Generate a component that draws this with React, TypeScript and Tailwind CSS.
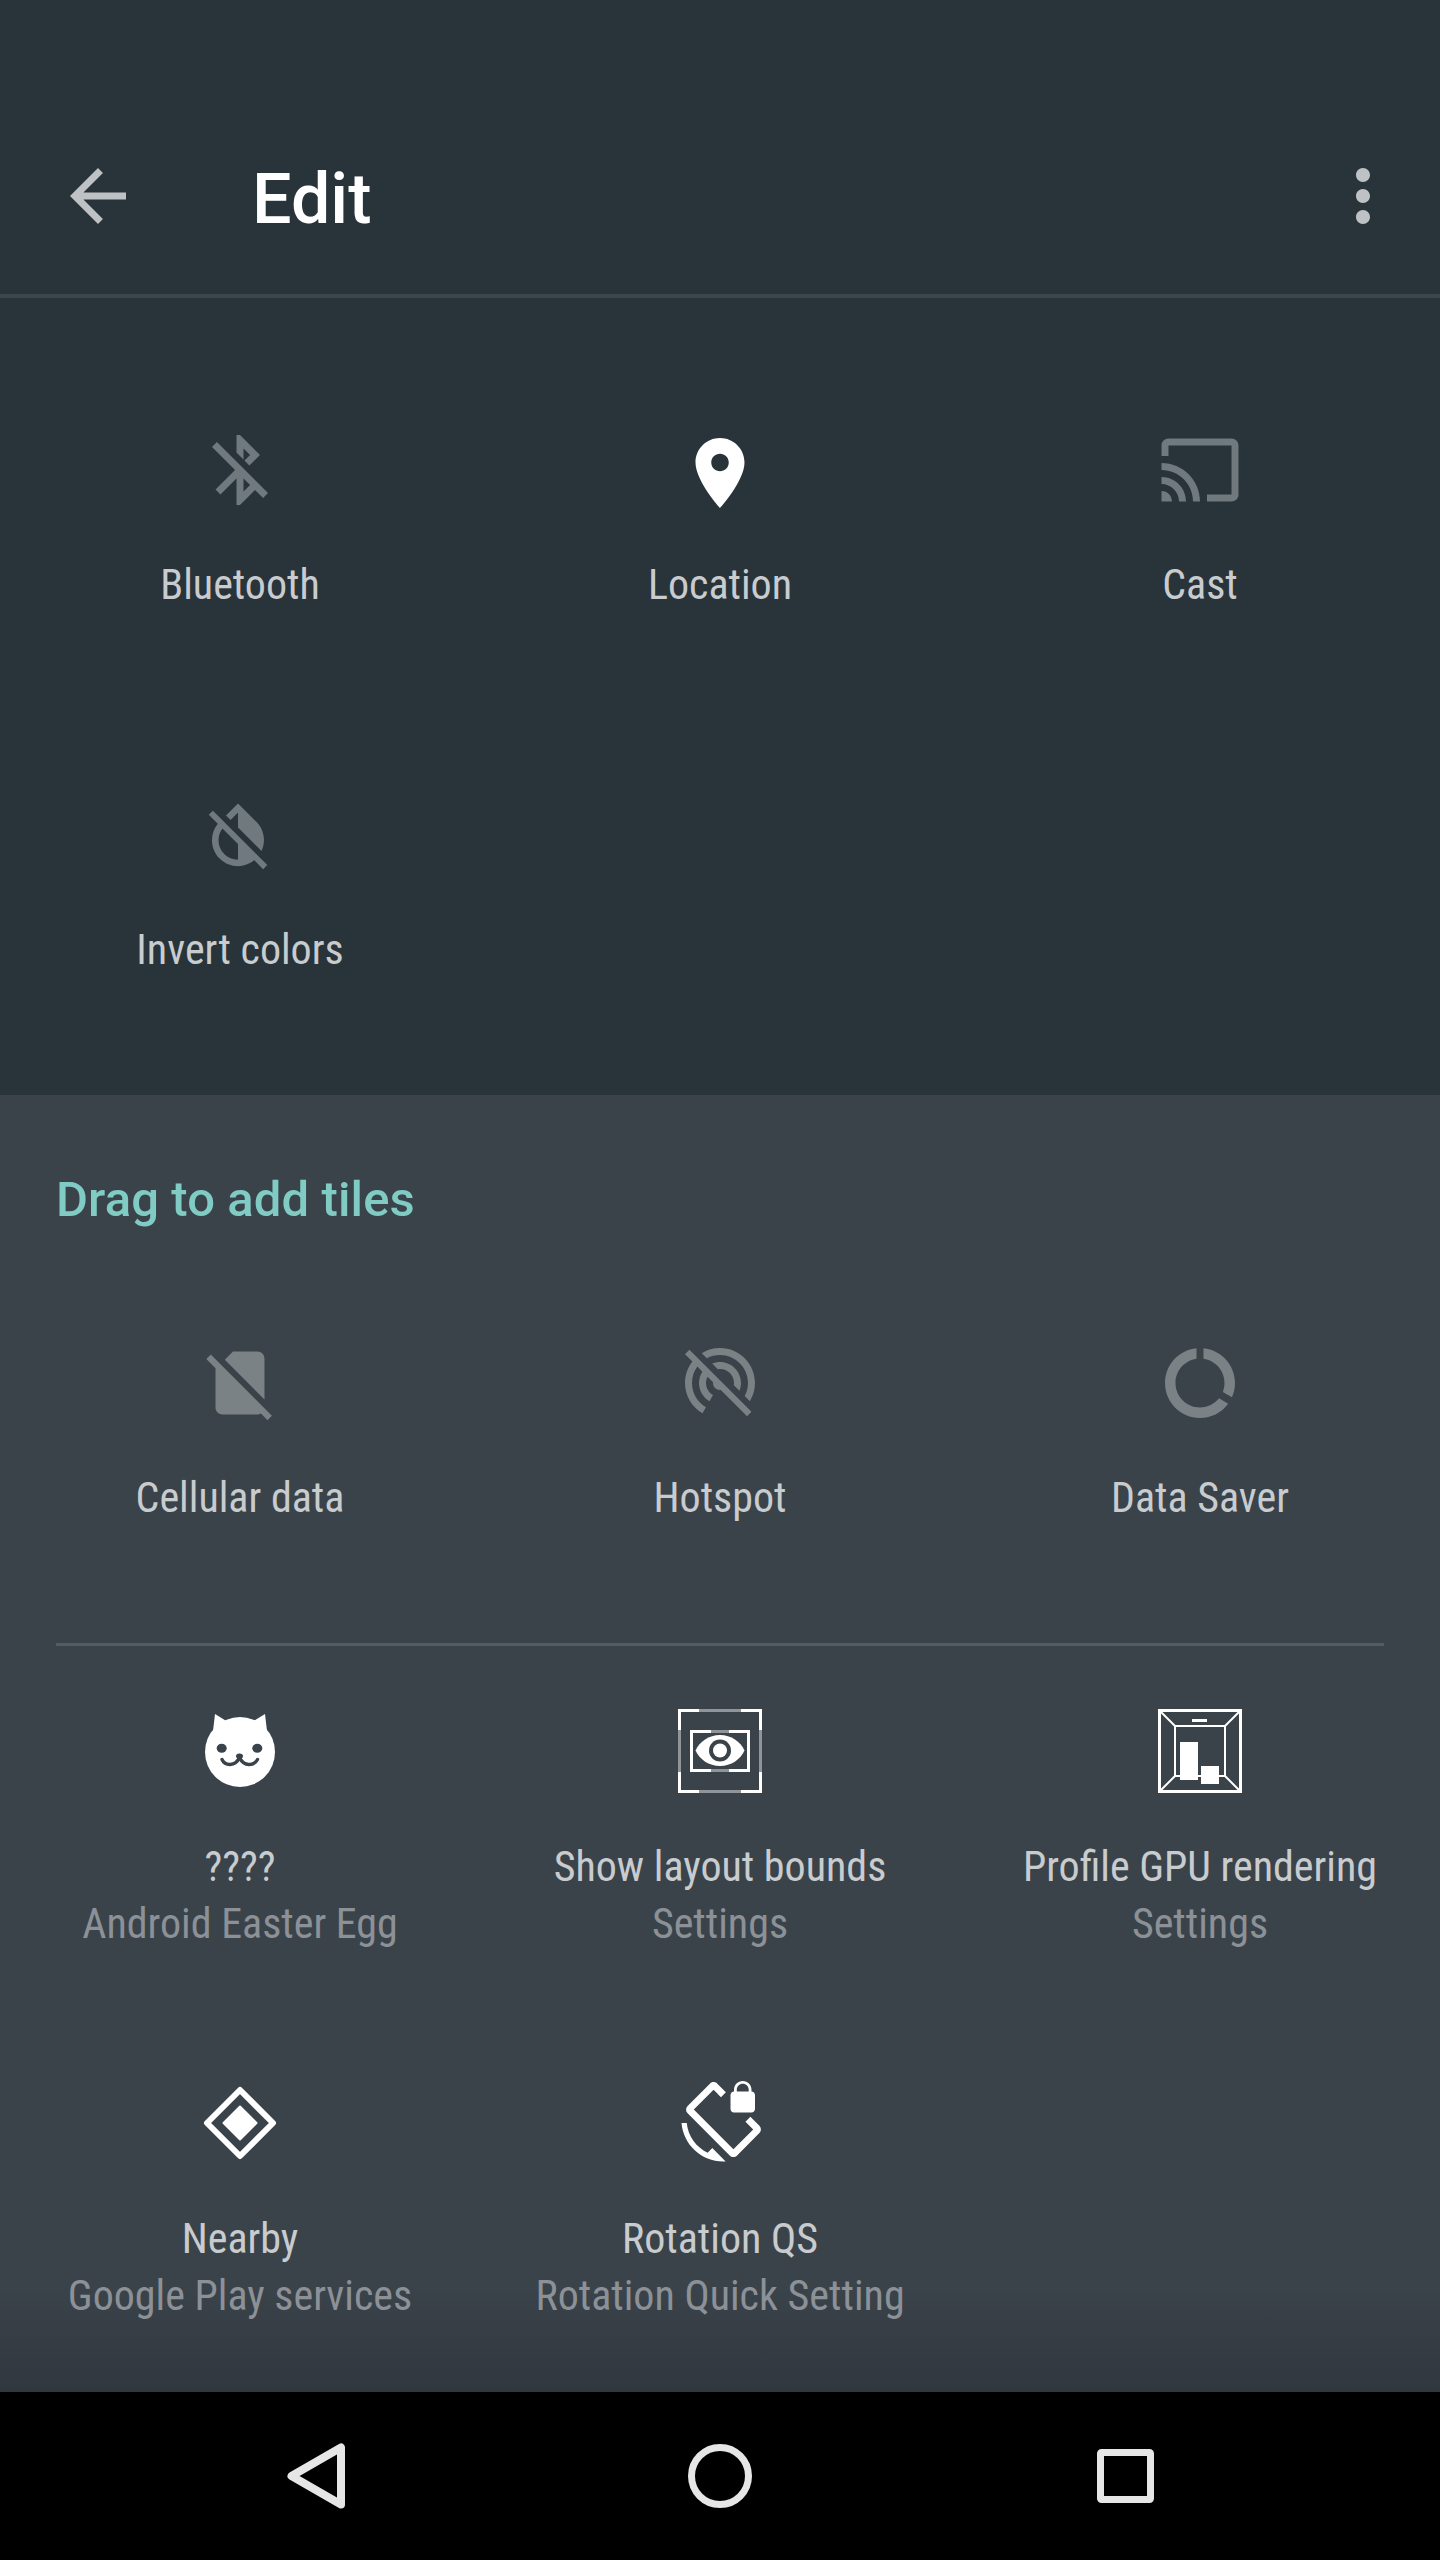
import type { ReactNode } from 'react';

const activeIcons = {
  place: 'M12 2C8.13 2 5 5.13 5 9c0 5.25 7 13 7 13s7-7.75 7-13c0-3.87-3.13-7-7-7zm0 9.5c-1.38 0-2.5-1.12-2.5-2.5s1.12-2.5 2.5-2.5 2.5 1.12 2.5 2.5-1.12 2.5-2.5 2.5z',
  rotation: 'M23.25 12.77l-2.57-2.57-1.41 1.41 2.22 2.22-5.66 5.66L4.51 8.17l5.66-5.66 2.1 2.1 1.41-1.41L11.23.75c-.59-.59-1.54-.59-2.12 0L2.75 7.11c-.59.59-.59 1.54 0 2.12l12.02 12.02c.59.59 1.54.59 2.12 0l6.36-6.36c.59-.59.59-1.54 0-2.12zM8.47 20.48C5.2 18.94 2.86 15.76 2.5 12H1c.51 6.16 5.66 11 11.95 11l.66-.03-3.81-3.82-1.33 1.33zM16 9h5c.55 0 1-.45 1-1V4c0-.55-.45-1-1-1v-.5C21 1.12 19.88 0 18.5 0S16 1.12 16 2.5V3c-.55 0-1 .45-1 1v4c0 .55.45 1 1 1zm.8-6.5c0-.94.76-1.7 1.7-1.7s1.7.76 1.7 1.7V3h-3.4v-.5z',
};

const mutedIcons = {
  bluetooth: 'M13 5.83l1.88 1.88-1.6 1.6 1.41 1.41 3.02-3.02L12 2h-1v5.03l2 2v-3.2zM5.41 4L4 5.41 10.59 12 5 17.59 6.41 19 11 14.41V22h1l4.29-4.29 2.3 2.29L20 18.59 5.41 4zM13 18.17v-3.76l1.88 1.88L13 18.17z',
  cast: 'M21 3H3c-1.1 0-2 .9-2 2v3h2V5h18v14h-7v2h7c1.1 0 2-.9 2-2V5c0-1.1-.9-2-2-2zM1 18v3h3c0-1.66-1.34-3-3-3zm0-4v2c2.76 0 5 2.24 5 5h2c0-3.87-3.13-7-7-7zm0-4v2c4.97 0 9 4.03 9 9h2c0-6.08-4.93-11-11-11z',
  invert: 'M20.65 20.87l-2.35-2.35-6.3-6.3-3.56-3.56-1.42-1.42L4.27 4.5 3 5.77l2.78 2.78c-2.55 3.14-2.36 7.76.56 10.69C7.9 20.8 9.95 21.58 12 21.58c1.79 0 3.57-.59 5.03-1.78l2.7 2.7L21 21.23l-.35-.36zM12 19.59c-1.6 0-3.11-.62-4.24-1.76C6.62 16.69 6 15.19 6 13.59c0-1.32.43-2.57 1.21-3.6L12 14.77v4.82zM12 5.1v4.58l7.25 7.26c1.37-2.96.84-6.57-1.6-9.01L12 2.27l-3.7 3.7 1.41 1.41L12 5.1z',
  noSim: 'M18.99 5c0-1.1-.89-2-1.99-2h-7L7.66 5.34 19 16.68 18.99 5zM3.65 3.88L2.38 5.15 5 7.77V19c0 1.1.9 2 2 2h10.01c.35 0 .67-.1.96-.26l1.88 1.88 1.27-1.27L3.65 3.88z',
  hotspot: 'M17.56 14.24c.28-.69.44-1.45.44-2.24 0-3.31-2.69-6-6-6-.79 0-1.55.16-2.24.44l1.62 1.62c.2-.03.41-.06.62-.06 2.21 0 4 1.79 4 4 0 .21-.02.42-.05.63l1.61 1.61zM12 4c4.42 0 8 3.58 8 8 0 1.35-.35 2.62-.95 3.74l1.47 1.47C21.46 15.69 22 13.91 22 12c0-5.52-4.48-10-10-10-1.91 0-3.69.55-5.21 1.47l1.46 1.46C9.37 4.34 10.65 4 12 4zM3.27 2.5L2 3.77l2.1 2.1C2.79 7.57 2 9.69 2 12c0 3.7 2.01 6.92 4.99 8.65l1-1.73C5.61 17.53 4 14.96 4 12c0-1.76.57-3.38 1.53-4.69l1.43 1.44C6.36 9.68 6 10.8 6 12c0 2.22 1.21 4.15 3 5.19l1-1.74c-1.19-.7-2-1.97-2-3.45 0-.65.17-1.25.44-1.79l1.58 1.58L10 12c0 1.1.9 2 2 2l.21-.02.01.01 7.51 7.51L21 20.23 4.27 3.5l-1-1z',
  dataSaver: 'M13 2.05v3.03c3.39.49 6 3.39 6 6.92 0 .9-.18 1.75-.48 2.54l2.6 1.53c.56-1.24.88-2.62.88-4.07 0-5.18-3.95-9.45-9-9.95zM12 19c-3.87 0-7-3.13-7-7 0-3.53 2.61-6.43 6-6.92V2.05c-5.06.5-9 4.76-9 9.95 0 5.52 4.47 10 9.99 10 3.31 0 6.24-1.61 8.06-4.09l-2.6-1.53C16.17 17.98 14.21 19 12 19z',
};

function Glyph({ d, className }: { d: string; className: string }) {
  return (
    <svg viewBox="0 0 24 24" className={`h-[84px] w-[84px] ${className}`}>
      <path d={d} fill="currentColor" />
    </svg>
  );
}

function CatIcon() {
  return (
    <svg viewBox="0 0 84 84" className="h-[84px] w-[84px]">
      <circle cx="42" cy="43" r="35" fill="#fff" />
      <path d="M17 5L30 13L15 22zM67 5L54 13L69 22z" fill="#fff" />
      <ellipse cx="23.7" cy="39.3" rx="5" ry="4.5" fill="#3b434a" />
      <ellipse cx="59.3" cy="39.3" rx="5" ry="4.5" fill="#3b434a" />
      <ellipse cx="41.5" cy="47" rx="3.5" ry="2.6" fill="#3b434a" />
      <path d="M24 50.5C27 57 37 58 41.5 48.5C46 58 56 57 59.5 50.5" fill="none" stroke="#3b434a" strokeWidth="3.4" strokeLinecap="round" />
    </svg>
  );
}

function LayoutBoundsIcon() {
  return (
    <svg viewBox="0 0 84 84" className="h-[84px] w-[84px]">
      <rect x="1.5" y="1.5" width="81" height="81" fill="none" stroke="#fff" strokeWidth="3" />
      <path d="M21 1.5H63M21 82.5H63M1.5 21V63M82.5 21V63" stroke="#8f9599" strokeWidth="3" />
      <rect x="13.5" y="22.5" width="57" height="39" fill="none" stroke="#fff" strokeWidth="3" />
      <path d="M33 22.5H51M33 61.5H51" stroke="#8f9599" strokeWidth="3" />
      <path d="M42 26C31 26 21.5 32.5 17.5 41.5C21.5 50.5 31 57 42 57S62.5 50.5 66.5 41.5C62.5 32.5 53 26 42 26z" fill="#fff" />
      <circle cx="42" cy="41.5" r="11" fill="#3b434a" />
      <circle cx="42" cy="41.5" r="7" fill="#fff" />
    </svg>
  );
}

function GpuIcon() {
  return (
    <svg viewBox="0 0 84 84" className="h-[84px] w-[84px]">
      <rect x="1.5" y="1.5" width="81" height="81" fill="none" stroke="#fff" strokeWidth="3" />
      <rect x="17" y="17" width="50" height="50" fill="none" stroke="#fff" strokeWidth="2" />
      <path d="M2 2L17 17M82 2L67 17M2 82L17 67M82 82L67 67" stroke="#fff" strokeWidth="2" />
      <rect x="34" y="10" width="15" height="3" fill="#fff" />
      <rect x="22" y="33" width="18" height="38" fill="#fff" />
      <rect x="43" y="57" width="18" height="18" fill="#fff" />
    </svg>
  );
}

function NearbyIcon() {
  return (
    <svg viewBox="0 0 84 84" className="h-[84px] w-[84px]">
      <path d="M42 9L75 42L42 75L9 42z" fill="none" stroke="#fff" strokeWidth="6" strokeLinejoin="round" />
      <path d="M42 25.5L58.5 42L42 58.5L25.5 42z" fill="#fff" stroke="#fff" strokeWidth="2" strokeLinejoin="round" />
    </svg>
  );
}

function Tile({ icon, label, sub }: { icon: ReactNode; label: string; sub?: string }) {
  return (
    <div className="flex flex-col items-center">
      {icon}
      <div className={`${sub ? 'mt-[46px]' : 'mt-[45px]'} text-[42px] leading-[56px] text-[#c8cccf] whitespace-nowrap [font-stretch:75%]`}>{label}</div>
      {sub && <div className="text-[42px] leading-[57px] text-[#8b9197] whitespace-nowrap [font-stretch:75%]">{sub}</div>}
    </div>
  );
}

function App() {
  const muted = 'text-[#6f797e]';
  const mutedLight = 'text-[#7a8286]';
  return (
    <div className="flex min-h-[2560px] w-[1440px] flex-col bg-black font-[Roboto,sans-serif]">
      <div className="h-[1095px] bg-[#29343a]">
        {/* Toolbar */}
        <header className="flex h-[298px] items-start justify-between border-b-4 border-[#3c464d] pl-[56px] pr-[35px] pt-[154px]">
          <div className="flex items-center">
            <Glyph d="M20 11H7.83l5.59-5.59L12 4l-8 8 8 8 1.41-1.41L7.83 13H20v-2z" className="text-[#bec2c4]" />
            <h1 className="ml-[112px] translate-y-[3px] text-[70px] leading-[84px] font-medium text-white">Edit</h1>
          </div>
          <Glyph d="M12 8c1.1 0 2-.9 2-2s-.9-2-2-2-2 .9-2 2 .9 2 2 2zm0 2c-1.1 0-2 .9-2 2s.9 2 2 2 2-.9 2-2-.9-2-2-2zm0 6c-1.1 0-2 .9-2 2s.9 2 2 2 2-.9 2-2-.9-2-2-2z" className="text-[#bec2c4]" />
        </header>
        {/* Active tiles */}
        <div className="grid grid-cols-3 gap-y-[180px] pt-[130px]">
          <Tile icon={<Glyph d={mutedIcons.bluetooth} className={muted} />} label="Bluetooth" />
          <Tile icon={<Glyph d={activeIcons.place} className="translate-y-[3px] text-white" />} label="Location" />
          <Tile icon={<Glyph d={mutedIcons.cast} className={muted} />} label="Cast" />
          <Tile icon={<Glyph d={mutedIcons.invert} className={`-translate-x-[2px] p-[3px] ${muted}`} />} label="Invert colors" />
        </div>
      </div>

      <div className="h-[1297px] bg-[linear-gradient(to_bottom,#3b434a_92%,#30373e_100%)]">
        <div className="pl-[56px] pt-[77px] text-[49px] leading-[56px] font-medium tracking-[0.1px] text-[#80cbc4]">Drag to add tiles</div>
        <div className="mt-[113px] grid grid-cols-3">
          <Tile icon={<Glyph d={mutedIcons.noSim} className={mutedLight} />} label="Cellular data" />
          <Tile icon={<Glyph d={mutedIcons.hotspot} className={mutedLight} />} label="Hotspot" />
          <Tile icon={<Glyph d={mutedIcons.dataSaver} className={mutedLight} />} label="Data Saver" />
        </div>
        <div className="mx-[56px] mt-[117px] h-[3px] bg-[#545c63]" />
        <div className="mt-[63px] grid grid-cols-3 gap-y-[129px]">
          <Tile icon={<CatIcon />} label="????" sub="Android Easter Egg" />
          <Tile icon={<LayoutBoundsIcon />} label="Show layout bounds" sub="Settings" />
          <Tile icon={<GpuIcon />} label="Profile GPU rendering" sub="Settings" />
          <Tile icon={<NearbyIcon />} label="Nearby" sub="Google Play services" />
          <Tile icon={<Glyph d={activeIcons.rotation} className="text-white" />} label="Rotation QS" sub="Rotation Quick Setting" />
        </div>
      </div>

      {/* Navigation bar */}
      <nav className="flex h-[168px] items-center justify-center gap-[320px] bg-black">
        <svg viewBox="0 0 84 84" className="h-[84px] w-[84px]">
          <path d="M67 13.5V70.5L17.5 42z" fill="none" stroke="#e6e6e6" strokeWidth="8" strokeLinejoin="round" />
        </svg>
        <svg viewBox="0 0 84 84" className="h-[84px] w-[84px]">
          <circle cx="42" cy="42" r="28.5" fill="none" stroke="#e6e6e6" strokeWidth="7" />
        </svg>
        <svg viewBox="0 0 84 84" className="h-[84px] w-[84px]">
          <rect x="18.5" y="18.5" width="50" height="47" rx="1" fill="none" stroke="#e6e6e6" strokeWidth="7" />
        </svg>
      </nav>
    </div>
  );
}

export default App;
